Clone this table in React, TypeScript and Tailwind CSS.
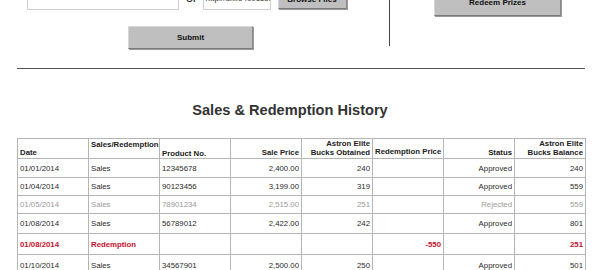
import React from "react";

type Row = {
  date: string;
  type: string;
  product: string;
  sale: string;
  obtained: string;
  redemption: string;
  status: string;
  balance: string;
  kind: "normal" | "rejected" | "redeem";
  h: string;
};

const rows: Row[] = [
  { date: "01/01/2014", type: "Sales", product: "12345678", sale: "2,400.00", obtained: "240", redemption: "", status: "Approved", balance: "240", kind: "normal", h: "h-[19px]" },
  { date: "01/04/2014", type: "Sales", product: "90123456", sale: "3,199.00", obtained: "319", redemption: "", status: "Approved", balance: "559", kind: "normal", h: "h-[18px]" },
  { date: "01/05/2014", type: "Sales", product: "78901234", sale: "2,515.00", obtained: "251", redemption: "", status: "Rejected", balance: "559", kind: "rejected", h: "h-[18px]" },
  { date: "01/08/2014", type: "Sales", product: "56789012", sale: "2,422.00", obtained: "242", redemption: "", status: "Approved", balance: "801", kind: "normal", h: "h-[20px]" },
  { date: "01/08/2014", type: "Redemption", product: "", sale: "", obtained: "", redemption: "-550", status: "", balance: "251", kind: "redeem", h: "h-[21px]" },
  { date: "01/10/2014", type: "Sales", product: "34567901", sale: "2,500.00", obtained: "250", redemption: "", status: "Approved", balance: "501", kind: "normal", h: "h-[21px]" },
];

const btn =
  "bg-[#bfbfbf] border border-[#d6d6d6] border-r-[#8a8a8a] border-b-[#7a7a7a] shadow-[1px_1px_0_#9a9a9a] text-[8px] font-bold text-[#111] flex items-center justify-center";

export default function App() {
  return (
    <div
      className="relative w-[604px] h-[270px] overflow-hidden bg-white text-[#222]"
      style={{ fontFamily: '"Liberation Sans", Arial, sans-serif' }}
    >
      {/* Top area */}
      <div className="flex mt-[-14px] h-[82px]">
        <div className="w-[389px] flex flex-col">
          <div className="flex items-end h-[24px]">
            <div className="ml-[27px] w-[152px] h-[24px] border border-[#d0d0d0] bg-white" />
            <span className="ml-[7px] mb-[6px] text-[9px] font-bold text-[#333] leading-none">Or</span>
            <div className="ml-[6px] w-[68px] h-[24px] border border-[#d0d0d0] bg-white overflow-hidden flex items-end pb-[6px] px-[2px]">
              <span className="text-[8px] leading-none text-[#333] whitespace-nowrap">http://dxifo40011oek</span>
            </div>
            <div className={`ml-[7px] w-[69px] h-[22px] mb-[1px] ${btn} items-end pb-[4px]`}>
              <span className="leading-none">Browse Files</span>
            </div>
          </div>
          <div className={`ml-[128px] mt-[16px] w-[125px] h-[23px] ${btn}`}>Submit</div>
        </div>
        <div className="w-px h-[60px] bg-[#444]" />
        <div className="flex-1">
          <div className={`ml-[44px] mt-[8px] w-[127px] h-[22px] ${btn} items-end pb-[8px]`}>
            <span className="leading-none">Redeem Prizes</span>
          </div>
        </div>
      </div>

      {/* Horizontal rule */}
      <div className="ml-[17px] w-[568px] h-px bg-[#555]" />

      {/* Title */}
      <h2 className="mt-[33px] pr-[24px] text-center text-[14.6px] font-bold text-[#333] leading-[17px]">
        Sales &amp; Redemption History
      </h2>

      {/* Table */}
      <table className="ml-[17px] mt-[19px] w-[569px] table-fixed border-collapse text-[7.8px] leading-[9px]">
        <colgroup>
          {Array.from({ length: 8 }).map((_, i) => (
            <col key={i} className="w-[71px]" />
          ))}
        </colgroup>
        <thead>
          <tr className="h-[19px] font-bold text-[#222]">
            <th className="border border-[#b5b5b5] px-[2px] pb-[1px] text-left align-bottom">Date</th>
            <th className="border border-[#b5b5b5] px-[2px] pt-[1px] text-left align-top">Sales/Redemption</th>
            <th className="border border-[#b5b5b5] px-[2px] pb-0 text-left align-bottom">Product No.</th>
            <th className="border border-[#b5b5b5] px-[2px] pb-[1px] text-right align-bottom">Sale Price</th>
            <th className="border border-[#b5b5b5] px-[2px] pb-[1px] text-right align-bottom">
              Astron Elite
              <br />
              Bucks Obtained
            </th>
            <th className="border border-[#b5b5b5] px-[2px] pb-[2px] text-left align-bottom whitespace-nowrap">Redemption Price</th>
            <th className="border border-[#b5b5b5] px-[2px] pb-[1px] text-right align-bottom">Status</th>
            <th className="border border-[#b5b5b5] px-[2px] pb-[1px] text-right align-bottom">
              Astron Elite
              <br />
              Bucks Balance
            </th>
          </tr>
        </thead>
        <tbody>
          {rows.map((r, i) => {
            const color =
              r.kind === "rejected"
                ? "text-[#9a9a9a]"
                : r.kind === "redeem"
                ? "text-[#c8102e] font-bold"
                : "text-[#2a2a2a]";
            const td = "border border-[#b5b5b5] px-[2px] align-middle";
            return (
              <tr key={i} className={`${r.h} ${color}`}>
                <td className={`${td} text-left`}>{r.date}</td>
                <td className={`${td} text-left`}>{r.type}</td>
                <td className={`${td} text-left`}>{r.product}</td>
                <td className={`${td} text-right`}>{r.sale}</td>
                <td className={`${td} text-right`}>{r.obtained}</td>
                <td className={`${td} text-right`}>{r.redemption}</td>
                <td className={`${td} text-right`}>{r.status}</td>
                <td className={`${td} text-right`}>{r.balance}</td>
              </tr>
            );
          })}
        </tbody>
      </table>
    </div>
  );
}
